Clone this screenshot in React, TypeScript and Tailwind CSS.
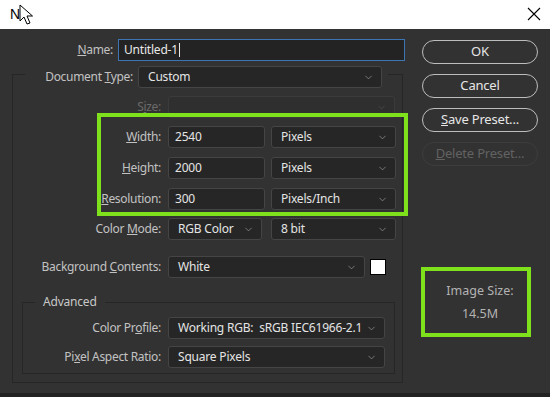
import { ChevronDown } from 'lucide-react';

const FONT = { fontFamily: '"Noto Sans", "Open Sans", sans-serif' };

function Select({ value, w, disabled }: { value?: string; w: string; disabled?: boolean }) {
  return (
    <div
      className={`${w} h-[22px] shrink-0 flex items-center justify-between pl-[9px] pr-[7px] rounded-[3px] border text-[12px] tracking-[-0.2px] ${
        disabled ? 'border-[#3b3b3b] bg-[#2f2f2f]' : 'border-[#454545] bg-[#262626] text-[#e4e4e4]'
      }`}
    >
      <span className="whitespace-pre">{value}</span>
      <ChevronDown size={11} strokeWidth={1.5} className={disabled ? 'text-[#4f4f4f]' : 'text-[#9c9c9c]'} />
    </div>
  );
}

function Field({ value, w }: { value: string; w: string }) {
  return (
    <div className={`${w} h-[22px] shrink-0 flex items-center pl-[6px] rounded-[3px] border border-[#454545] bg-[#262626] text-[12px] tracking-[-0.2px] text-[#e4e4e4]`}>
      {value}
    </div>
  );
}

function Label({ children, w, dim }: { children: React.ReactNode; w: string; dim?: boolean }) {
  return (
    <div className={`${w} shrink-0 text-right text-[12px] tracking-[-0.3px] whitespace-nowrap ${dim ? 'text-[#6b6b6b]' : 'text-[#c2c2c2]'}`}>
      {children}
    </div>
  );
}

function PillButton({ children, disabled }: { children: React.ReactNode; disabled?: boolean }) {
  return (
    <div
      className={`w-[116px] h-[24px] flex items-center justify-center rounded-full border-[1.5px] text-[13px] tracking-[-0.2px] ${
        disabled ? 'border-[#3d3d3d] text-[#626262]' : 'border-[#bdbdbd] text-[#e6e6e6]'
      }`}
    >
      {children}
    </div>
  );
}

export default function App() {
  return (
    <div className="w-[550px] h-[397px] flex flex-col overflow-hidden select-none" style={FONT}>
      {/* ── Title bar ── */}
      <div className="relative h-[29px] shrink-0 bg-white flex items-center pl-[10px]">
        <span className="text-[14px] text-black" style={{ fontFamily: '"Liberation Sans", sans-serif' }}>N</span>
        <svg className="absolute left-[19px] top-[4px]" width="16" height="22" viewBox="0 0 16 22">
          <path d="M1 1 L1 17 L5 13 L8 20 L11 19 L8 12 L13.5 12 Z" fill="white" stroke="black" strokeWidth="1" strokeLinejoin="round" />
        </svg>
        <svg className="absolute left-[527px] top-[7px]" width="14" height="14" viewBox="0 0 14 14">
          <path d="M1 1 L13 13 M13 1 L1 13" stroke="black" strokeWidth="1.1" />
        </svg>
      </div>

      {/* ── Body ── */}
      <div className="relative flex-1 flex bg-[#323232]">
        {/* left column */}
        <div className="w-[405px] shrink-0 pl-3 pt-[10px]">
          <div className="flex items-center gap-[5px]">
            <Label w="w-[101px]"><u>N</u>ame:</Label>
            <div className="w-[287px] h-[22px] flex items-center pl-[5px] border border-[#3d74b3] bg-[#232323] text-[12px] tracking-[-0.2px] text-[#e8e8e8]">
              Untitled-1<span className="ml-px w-px h-[14px] bg-[#e8e8e8]" />
            </div>
          </div>

          <div className="mt-[13px] w-[391px] border border-[#262626] pb-2">
            <div className="-mt-[9px] ml-3 w-[363px] pr-[6px] bg-[#323232] flex items-center gap-[5px]">
              <Label w="w-[108px]">Document <u>T</u>ype:</Label>
              <Select value="Custom" w="w-[244px]" />
            </div>

            <div className="mt-2 flex items-center gap-[7px]">
              <Label w="w-[148px]" dim>S<u>i</u>ze:</Label>
              <Select w="w-[227px]" disabled />
            </div>

            <div className="mt-2 flex items-center gap-[7px]">
              <Label w="w-[148px]"><u>W</u>idth:</Label>
              <div className="flex gap-[6px]">
                <Field value="2540" w="w-[97px]" />
                <Select value="Pixels" w="w-[125px]" />
              </div>
            </div>

            <div className="mt-[9px] flex items-center gap-[7px]">
              <Label w="w-[148px]"><u>H</u>eight:</Label>
              <div className="flex gap-[6px]">
                <Field value="2000" w="w-[97px]" />
                <Select value="Pixels" w="w-[125px]" />
              </div>
            </div>

            <div className="mt-[9px] flex items-center gap-[7px]">
              <Label w="w-[148px]"><u>R</u>esolution:</Label>
              <div className="flex gap-[6px]">
                <Field value="300" w="w-[97px]" />
                <Select value="Pixels/Inch" w="w-[125px]" />
              </div>
            </div>

            <div className="mt-2 flex items-center gap-[7px]">
              <Label w="w-[148px]">Color <u>M</u>ode:</Label>
              <div className="flex gap-[9px]">
                <Select value="RGB Color" w="w-[94px]" />
                <Select value="8 bit" w="w-[125px]" />
              </div>
            </div>

            <div className="mt-4 flex items-center gap-[7px]">
              <Label w="w-[148px]">Background <u>C</u>ontents:</Label>
              <div className="flex items-center gap-[5px]">
                <Select value="White" w="w-[197px]" />
                <div className="w-4 h-4 bg-white border border-black" />
              </div>
            </div>

            {/* Advanced */}
            <div className="mt-6 ml-[9px] w-[373px] border border-[#262626] pb-[5px]">
              <div className="-mt-[9px] ml-3 w-fit px-2 bg-[#323232] text-[12px] tracking-[-0.2px] leading-[16px] text-[#c8c8c8]">Advanced</div>
              <div className="mt-[7px] flex items-center gap-[7px]">
                <Label w="w-[138px]">Color Pr<u>o</u>file:</Label>
                <Select value="Working RGB:  sRGB IEC61966-2.1" w="w-[217px]" />
              </div>
              <div className="mt-[7px] flex items-center gap-[7px]">
                <Label w="w-[138px]">Pi<u>x</u>el Aspect Ratio:</Label>
                <Select value="Square Pixels" w="w-[217px]" />
              </div>
            </div>
          </div>
        </div>

        {/* right column */}
        <div className="ml-[17px] pt-[11px] flex flex-col">
          <div className="flex flex-col gap-[10px]">
            <PillButton>OK</PillButton>
            <PillButton>Cancel</PillButton>
            <PillButton><u>S</u>ave Preset...</PillButton>
            <PillButton disabled><u>D</u>elete Preset...</PillButton>
          </div>
          <div className="mt-[101px] -ml-px w-[110px] h-[70px] border-4 border-[#7fe11c] flex flex-col items-center pt-[11px] gap-[4px] text-[12.5px] text-[#b3b3b3]">
            <span className="pl-2">Image Size:</span>
            <span className="pl-2">14.5M</span>
          </div>
        </div>

        {/* highlight annotation */}
        <div className="absolute left-[97px] top-[84px] w-[311px] h-[103px] border-4 border-[#7fe11c] pointer-events-none" />
      </div>
      <div className="h-[4px] shrink-0 bg-[#222222]" />
    </div>
  );
}
